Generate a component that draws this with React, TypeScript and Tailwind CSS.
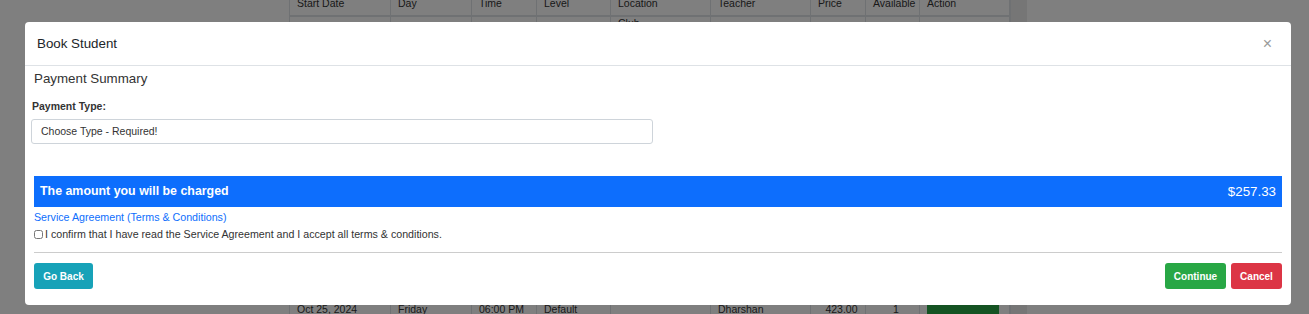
import { useState } from 'react';

const cols = [
  { label: 'Start Date', w: 'w-[101px]' },
  { label: 'Day', w: 'w-[81px]' },
  { label: 'Time', w: 'w-[65px]' },
  { label: 'Level', w: 'w-[74px]' },
  { label: 'Location', w: 'w-[100px]' },
  { label: 'Teacher', w: 'w-[100px]' },
  { label: 'Price', w: 'w-[55px]' },
  { label: 'Available', w: 'w-[54px]' },
  { label: 'Action', w: 'w-[90px]' },
];

const lastRow = ['Oct 25, 2024', 'Friday', '06:00 PM', 'Default', '', 'Dharshan', '423.00', '1', ''];

function ScheduleTable() {
  return (
    <div className="ml-[289px] -mt-[10px] flex w-[738px] text-[10.5px] text-[#333] font-['Liberation_Sans',Arial,sans-serif]">
      <div className="flex flex-col border-l border-[#dee2e6]">
        <div className="flex h-[27px] border-b-2 border-[#dee2e6]">
          {cols.map((c) => (
            <div key={c.label} className={`${c.w} border-r border-[#dee2e6] pl-[7px] pt-[6px] leading-[14px] whitespace-nowrap`}>
              {c.label}
            </div>
          ))}
        </div>
        <div className="flex h-[283px] border-b border-[#dee2e6]">
          {cols.map((c) => (
            <div key={c.label} className={`${c.w} border-r border-[#dee2e6] pl-[7px] leading-[12px]`}>
              {c.label === 'Location' ? 'Club' : ''}
            </div>
          ))}
        </div>
        <div className="flex h-[40px]">
          {cols.map((c, i) => (
            <div
              key={c.label}
              className={`${c.w} border-r border-[#dee2e6] pl-[7px] pt-[2px] leading-[14px] whitespace-nowrap ${i === 6 || i === 7 ? 'pl-0 text-center' : ''}`}
            >
              {i === 8 ? (
                <div className="h-[20px] w-[72px] rounded-[3px] bg-[#28a745]" />
              ) : i === 4 ? (
                <div className="pt-[10px]">Club</div>
              ) : (
                lastRow[i]
              )}
            </div>
          ))}
        </div>
      </div>
      <div className="w-[18px] border-l border-[#dee2e6] bg-[#ececec]" />
    </div>
  );
}

export default function App() {
  const [agreed, setAgreed] = useState(false);

  return (
    <div className="relative h-[314px] w-full overflow-hidden bg-white font-['Liberation_Sans',Arial,sans-serif]">
      <ScheduleTable />

      {/* backdrop */}
      <div className="absolute inset-0 bg-black/50" />

      {/* modal */}
      <div className="absolute left-[25px] top-[22px] flex h-[283px] w-[1266px] flex-col rounded-[4px] bg-white text-[#212529]">
        <div className="flex h-[44px] items-center justify-between border-b border-[#dee2e6] pl-[12px] pr-[19px]">
          <h5 className="text-[13.33px] leading-[20px]">Book Student</h5>
          <button className="text-[16px] leading-none text-[#9a9a9a]">×</button>
        </div>

        <div className="flex flex-col px-[9px]">
          <div className="mt-[4px] text-[13.33px] leading-[18px] text-[#333]">Payment Summary</div>

          <label className="mt-[11px] ml-[-2px] text-[10.5px] font-bold leading-[14px] text-[#333]">Payment Type:</label>
          <div className="mt-[6px] ml-[-3px] flex h-[25px] w-[622px] items-center rounded-[3px] border border-[#ced4da] px-[9px] text-[10.5px] text-[#333]">
            Choose Type - Required!
          </div>

          <div className="mt-[32px] flex h-[31px] items-center justify-between bg-[#0d6efd] px-[6px] text-white">
            <span className="text-[12.4px] font-bold">The amount you will be charged</span>
            <span className="text-[13.33px]">$257.33</span>
          </div>

          <a className="mt-[3px] text-[10.67px] leading-[14px] text-[#0d6efd]">Service Agreement (Terms &amp; Conditions)</a>
          <label className="mt-[3px] flex items-center gap-[2px] text-[10.67px] leading-[14px] text-[#333]">
            <input
              type="checkbox"
              checked={agreed}
              onChange={() => setAgreed(!agreed)}
              className="m-0 h-[9px] w-[9px]"
            />
            I confirm that I have read the Service Agreement and I accept all terms &amp; conditions.
          </label>

          <div className="mt-[11px] border-t border-[#ccc]" />

          <div className="mt-[10px] flex items-center justify-between">
            <button className="h-[26px] w-[59px] rounded-[3px] bg-[#17a2b8] text-[10px] font-bold text-white">Go Back</button>
            <div className="flex gap-[5px]">
              <button className="h-[26px] w-[61px] rounded-[3px] bg-[#28a745] text-[10px] font-bold text-white">Continue</button>
              <button className="h-[26px] w-[51px] rounded-[3px] bg-[#dc3545] text-[10px] font-bold text-white">Cancel</button>
            </div>
          </div>
        </div>
      </div>
    </div>
  );
}
